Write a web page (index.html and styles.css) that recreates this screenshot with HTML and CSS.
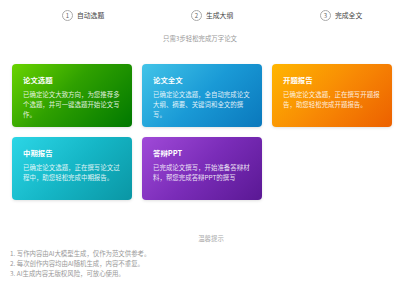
FILE: index.html
```
<!DOCTYPE html>
<html>
    <head>
        <title>AI论文</title>
        <meta charset="UTF-8">
        <meta name="viewport" content="width=device-width, initial-scale=1.0">
        <link rel="stylesheet" href="styles.css">
    </head>
    <body>
        <div class="steps">
            <div class="step"><span class="num">1</span>自动选题</div>
            <div class="step"><span class="num">2</span>生成大纲</div>
            <div class="step"><span class="num">3</span>完成全文</div>
        </div>
        <p class="slogan">只需3步轻松完成万字论文</p>

        <div class="cards">
            <div class="card green">
                <h3>论文选题</h3>
                <p>已确定论文大致方向，为您推荐多个选题，并可一键选题开始论文写作。</p>
            </div>
            <div class="card blue">
                <h3>论文全文</h3>
                <p>已确定论文选题，全自动完成论文大纲、摘要、关键词和全文的撰写。</p>
            </div>
            <div class="card orange">
                <h3>开题报告</h3>
                <p>已确定论文选题，正在撰写开题报告，助您轻松完成开题报告。</p>
            </div>
            <div class="card cyan">
                <h3>中期报告</h3>
                <p>已确定论文选题，正在撰写论文过程中，助您轻松完成中期报告。</p>
            </div>
            <div class="card purple">
                <h3>答辩PPT</h3>
                <p>已完成论文撰写，开始准备答辩材料，帮您完成答辩PPT的撰写</p>
            </div>
        </div>

        <div class="tips">
            <div class="tips-title">温馨提示</div>
            <p>1. 写作内容由AI大模型生成，仅作为范文供参考。</p>
            <p>2. 每次创作内容均由AI随机生成，内容不重复。</p>
            <p>3. AI生成内容无版权风险，可放心使用。</p>
        </div>
    </body>
</html>
```

FILE: styles.css
```
body{
    margin:0;
    background:#fff;
    font-family:"Noto Sans CJK SC", "Noto Sans", sans-serif;
    color:#333;
}

.steps{
    display:flex;
    padding:10px 0 0 62px;
    height:11px;
}

.step{
    flex:0 0 129px;
    display:flex;
    align-items:center;
    font-size:6.8px;
    line-height:11px;
    color:#444;
}

.step:last-child{flex:none;}

.num{
    box-sizing:border-box;
    width:11px; height:11px;
    border:1px solid #aaa;
    border-radius:50%;
    font-size:6px;
    line-height:9px;
    text-align:center;
    color:#666;
    margin-right:4px;
}

.slogan{
    margin:13px 0 0;
    text-align:center;
    font-size:6.4px;
    line-height:10px;
    color:#999;
}

.cards{
    display:grid;
    grid-template-columns:repeat(3, 120px);
    grid-auto-rows:63px;
    gap:10px;
    padding-left:12px;
    margin-top:20px;
}

.card{
    border-radius:4px;
    padding:11px 10px 0 11px;
    color:#fff;
    box-shadow:0 1px 3px rgba(0,0,0,0.12);
    overflow:hidden;
}

.card h3{
    margin:0;
    font-size:7.4px;
    line-height:10px;
    font-weight:bold;
}

.card p{
    margin:5px 0 0;
    font-size:6.45px;
    line-height:10.2px;
    color:rgba(255,255,255,0.88);
}

.green{background:linear-gradient(135deg, #6ad400 0%, #2fa000 45%, #007800 100%);}
.blue{background:linear-gradient(135deg, #42c4e8 0%, #1a9ad6 50%, #0a78bc 100%);}
.orange{background:linear-gradient(135deg, #ffb600 0%, #f88a04 50%, #ec6000 100%);}
.cyan{background:linear-gradient(135deg, #2cd6e6 0%, #15b6c6 50%, #0a96a4 100%);}
.purple{background:linear-gradient(135deg, #a04ad8 0%, #7a2cb8 50%, #5a1894 100%);}

.tips{
    margin-top:34px;
    padding-left:10px;
    font-size:6.4px;
    color:#999;
}

.tips-title{
    text-align:center;
    line-height:10px;
    padding-left:12px;
    color:#aaa;
}

.tips p{
    margin:0;
    line-height:10px;
}

.tips-title + p{margin-top:5px;}
```
